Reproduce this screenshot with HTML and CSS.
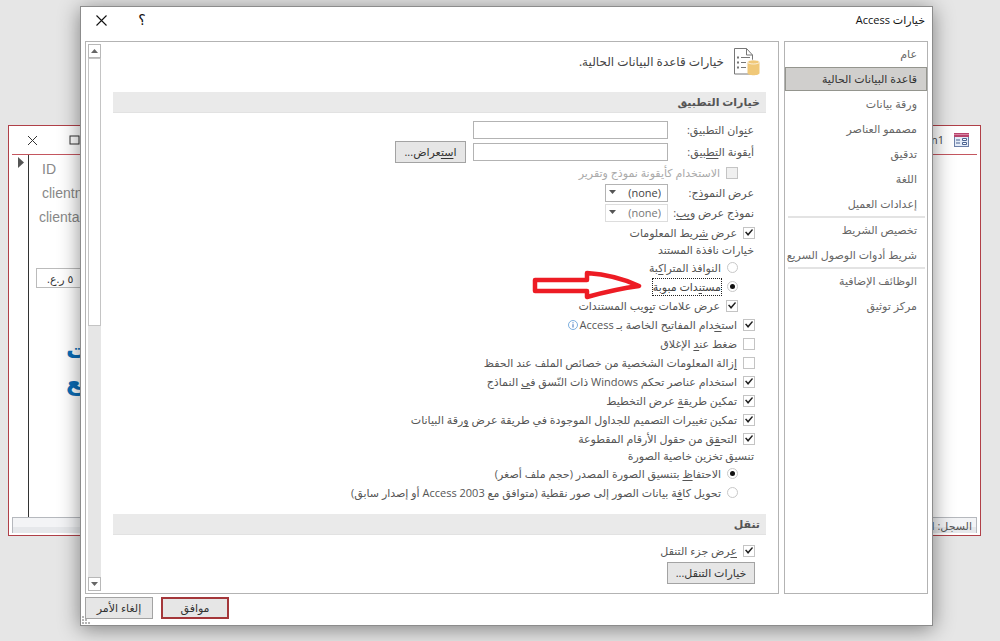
FILE: index.html
```html
<!DOCTYPE html>
<html lang="ar" dir="rtl">
<head>
<meta charset="utf-8">
<title>خيارات Access</title>
<link rel="stylesheet" href="styles.css">
</head>
<body>
<section class="form-window" aria-label="Form1">
  <header class="form-title">
    <svg class="form-icon" width="15" height="14" viewBox="0 0 15 14" aria-hidden="true"><rect x=".5" y=".5" width="14" height="13" fill="#e4ecf8" stroke="#6b7fa8"/><rect width="15" height="4" fill="#b8446c"/><rect y="1" width="15" height="1" fill="#d884a4"/><path d="M2 7h4M2 10h4" stroke="#4a6290"/><path d="M8.500 5.500h4v2h-4zM8.500 9.500h4v2h-4z" fill="#fff" stroke="#4a6290"/></svg>
    <span class="form-name" dir="ltr">m1</span>
    <span class="spacer"></span>
    <button class="win-btn" aria-label="تكبير"><svg width="11" height="11" viewBox="0 0 11 11"><rect x="1" y="1" width="9" height="8" fill="none" stroke="#333"/></svg></button>
    <button class="win-btn" aria-label="إغلاق النموذج"><svg width="11" height="11" viewBox="0 0 11 11"><path d="M1 1l9 9M10 1l-9 9" stroke="#333"/></svg></button>
  </header>
  <div class="form-body">
    <div class="form-fields" dir="ltr">
      <span class="field-name">ID</span>
      <span class="field-name">clientn</span>
      <span class="field-name outdent">clientad</span>
      <input class="amount" aria-label="المبلغ" value="٥ ر.ع." dir="rtl">
      <strong class="banner">ـت</strong>
      <strong class="banner">ـع</strong>
    </div>
    <div class="selector"><svg width="6" height="11" viewBox="0 0 6 11" aria-hidden="true"><path d="M0 0l6 5.500L0 11z" fill="#555"/></svg></div>
  </div>
  <footer class="record-bar">السجل: ا</footer>
</section>

<main class="dialog" role="dialog" aria-labelledby="dialog-title">
  <header class="dialog-title">
    <h1 id="dialog-title">خيارات Access</h1>
    <span class="spacer"></span>
    <button class="plain-btn">؟</button>
    <button class="plain-btn" aria-label="إغلاق"><svg width="11" height="11" viewBox="0 0 11 11"><path d="M.500.500l10 10M10.500.500l-10 10" stroke="#111" stroke-width="1.100"/></svg></button>
  </header>
  <div class="dialog-body">
    <nav class="sidebar">
      <a class="nav-item" href="#general">عام</a>
      <a class="nav-item current" href="#current" aria-current="page">قاعدة البيانات الحالية</a>
      <a class="nav-item" href="#datasheet">ورقة بيانات</a>
      <a class="nav-item" href="#designers">مصممو العناصر</a>
      <a class="nav-item" href="#proofing">تدقيق</a>
      <a class="nav-item" href="#language">اللغة</a>
      <a class="nav-item" href="#client">إعدادات العميل</a>
      <hr class="nav-rule">
      <a class="nav-item" href="#ribbon">تخصيص الشريط</a>
      <a class="nav-item" href="#quick">شريط أدوات الوصول السريع</a>
      <hr class="nav-rule">
      <a class="nav-item" href="#addins">الوظائف الإضافية</a>
      <a class="nav-item" href="#trust">مركز توثيق</a>
    </nav>
    <div class="pane">
      <div class="options">
        <div class="intro">
          <svg width="26" height="28" viewBox="0 0 26 28" aria-hidden="true"><path d="M.500.500h12l6 6.500v19H.500z" fill="#fff" stroke="#777"/><path d="M12.500.500v6.500h6" fill="none" stroke="#777"/><path d="M3 9.500h2M3 14.500h2M3 19.500h2" stroke="#777" stroke-width="2"/><path d="M7 9.500h9M7 14.500h5M7 19.500h5" stroke="#777"/><path d="M13.500 14v11c0 3 12 3 12 0V14z" fill="#f0c878"/><ellipse cx="19.500" cy="14" rx="6" ry="2" fill="#f0c878" stroke="#fff" stroke-width=".7"/></svg>
          <span>خيارات قاعدة البيانات الحالية.</span>
        </div>
        <h2 class="section">خيارات التطبيق</h2>
        <div class="group">
          <div class="field-row"><label class="field-label" for="app-title">ع<u>ن</u>وان التطبيق:</label><input class="text-box" id="app-title" type="text"></div>
          <div class="field-row"><label class="field-label" for="app-icon">أيقونة ال<u>تط</u>بيق:</label><input class="text-box" id="app-icon" type="text"><button class="btn browse">ا<u>ست</u>عراض...</button></div>
          <label class="row tall indent disabled"><input class="check" type="checkbox" disabled><span>الاستخدام كأيقونة نموذج وتقرير</span></label>
          <div class="combo-row"><label class="field-label" for="form-view">عرض النمو<u>ذ</u>ج:</label><span class="combo"><select id="form-view"><option>(none)</option></select></span></div>
          <div class="combo-row"><label class="field-label" for="web-view">نموذج عرض و<u>يب</u>:</label><span class="combo dim"><select id="web-view"><option>(none)</option></select></span></div>
          <label class="row"><input class="check" type="checkbox" checked><span>عرض <u>ش</u>ريط المعلومات</span></label>
          <p class="caption">خيارات نافذة المستند</p>
          <label class="row indent"><input class="radio" type="radio" name="windows"><span>النوافذ المترا<u>ك</u>بة</span></label>
          <label class="row indent"><input class="radio" type="radio" name="windows" checked><span class="focused">مست<u>ن</u>دات مبوبة</span>
            <svg class="pointer" width="110" height="30" viewBox="0 0 110 30" aria-hidden="true"><path d="M3 10H55V3Q84 5 107 16Q84 19 55 27V21H3z" fill="none" stroke="#ed1c24" stroke-width="4.500" stroke-linejoin="round"/></svg>
          </label>
          <label class="row indent"><input class="check" type="checkbox" checked><span>عرض علامات ت<u>ب</u>ويب المستندات</span></label>
          <label class="row"><input class="check" type="checkbox" checked><span>است<u>خ</u>دام المفاتيح الخاصة بـ Access</span><svg class="info" width="10" height="10" viewBox="0 0 10 10" aria-hidden="true"><circle cx="5" cy="5" r="4.500" fill="none" stroke="#5b9bd5" stroke-width=".8"/><path d="M5 4.200v3.300M5 2.300v1" stroke="#3a70b8"/></svg></label>
          <label class="row"><input class="check" type="checkbox"><span>ضغط عن<u>د</u> الإغلاق</span></label>
          <label class="row"><input class="check" type="checkbox"><span><u>إ</u>زالة المعلومات الشخصية من خصائص الملف عند الحفظ</span></label>
          <label class="row"><input class="check" type="checkbox" checked><span>استخدام عناصر تحكم Windows ذات النّسق ف<u>ي</u> النماذج</span></label>
          <label class="row"><input class="check" type="checkbox" checked><span>تمكين طريق<u>ة</u> عرض التخطيط</span></label>
          <label class="row"><input class="check" type="checkbox" checked><span>تمكين تغييرات التصميم للجداول الموجودة في طريقة عرض <u>و</u>رقة البيانات</span></label>
          <label class="row"><input class="check" type="checkbox" checked><span>التح<u>ق</u>ق من حقول الأرقام المقطوعة</span></label>
          <p class="caption">تنسيق تخزين خاصية الصورة</p>
          <label class="row indent"><input class="radio" type="radio" name="image" checked><span>الاحتفا<u>ظ</u> بتنسيق الصورة المصدر (حجم ملف أصغر)</span></label>
          <label class="row indent"><input class="radio" type="radio" name="image"><span>تحويل كا<u>ف</u>ة بيانات الصور إلى صور نقطية (متوافق مع Access 2003 أو إصدار سابق)</span></label>
        </div>
        <h2 class="section">تنقل</h2>
        <div class="group">
          <label class="row"><input class="check" type="checkbox" checked><span><u>ع</u>رض جزء التنقل</span></label>
          <button class="btn nav-options">خيارات التنقل...</button>
        </div>
      </div>
      <div class="scrollbar" aria-hidden="true">
        <span class="arrow up"></span><span class="thumb"></span><span class="track"></span><span class="arrow down"></span>
      </div>
    </div>
  </div>
  <footer class="dialog-footer">
    <button class="btn action primary">موافق</button>
    <button class="btn action">إلغاء الأمر</button>
  </footer>
  <svg class="grip" width="9" height="8" viewBox="0 0 9 8" aria-hidden="true"><path d="M0 1h2M0 4h2M3 4h2M0 7h2M3 7h2M6 7h2" stroke="#b5b5b5" stroke-width="2"/></svg>
</main>
</body>
</html>
```
FILE: styles.css
```css
* { box-sizing: border-box; }

body {
  margin: 0;
  min-height: 100vh;
  background: #e6e6e6;
  color: #555;
  font: 11px/16px "Open Sans", "DejaVu Sans", sans-serif;
  overflow: hidden;
}

button, input, select { font: inherit; color: inherit; margin: 0; }
h1, h2, p { margin: 0; font: inherit; }
u { text-decoration-thickness: 1px; text-underline-offset: 2px; text-decoration-skip-ink: none; }
.spacer { flex: 1; }

/* Form behind the dialog */
.form-window {
  position: absolute;
  inset: 125px 19px 105px 8px;
  display: flex;
  flex-direction: column;
  padding: 0 3px 2px;
  background: #fff;
  border: 1px solid #b04048;
}
.form-title {
  display: flex;
  align-items: center;
  gap: 10px;
  height: 29px;
  padding: 0 8px 0 15px;
  border-bottom: 1px solid #c4565f;
}
.form-name { color: #444; }
.win-btn {
  display: flex;
  width: 32px;
  padding: 0;
  border: 0;
  background: none;
  justify-content: flex-end;
}
.form-body { flex: 1; display: flex; }
.form-fields {
  flex: 1;
  display: flex;
  flex-direction: column;
  align-items: flex-start;
  padding: 2px 0 0 13px;
}
.field-name { font: 14px/24px "Liberation Sans", Arial, sans-serif; color: #888; }
.outdent { margin-left: -3px; }
.amount {
  width: 100px;
  height: 20px;
  margin: 39px 0 46px -6px;
  padding: 0 10px;
  border: 1px solid #bbb;
  color: #333;
  text-align: left;
}
.banner { font: bold 24px/32px "DejaVu Sans", sans-serif; color: #0b6cb5; padding-left: 24px; }
.selector {
  width: 17px;
  padding: 2px 4px 0 0;
  border-right: 1px solid #333;
}
.selector svg { display: block; }
.record-bar {
  height: 16px;
  padding: 0 4px;
  border: 1px solid #b5b8bd;
  border-bottom: 0;
  background: linear-gradient(#f3f4f6 60%, #e6e8eb 60%);
}

/* Options dialog */
.dialog {
  position: absolute;
  inset: 6px 67px 15px 80px;
  display: flex;
  flex-direction: column;
  padding: 0 4px;
  background: #fff;
  border: 1px solid #8c8c8c;
  box-shadow: 0 3px 20px rgba(0, 0, 0, .45);
}
.dialog-title {
  display: flex;
  align-items: center;
  height: 34px;
  padding: 0 3px 8px 10px;
  color: #111;
}
.plain-btn {
  display: flex;
  justify-content: center;
  width: 12px;
  margin-right: 29px;
  padding: 0;
  border: 0;
  background: none;
  font-size: 14px;
}
.dialog-body { flex: 1; display: flex; gap: 5px; min-height: 0; }
.sidebar {
  flex: 0 0 144px;
  display: flex;
  flex-direction: column;
  gap: 1px;
  min-width: 0;
  border: 1px solid #b3b3b3;
}
.nav-item {
  height: 24px;
  padding-right: 10px;
  line-height: 24px;
  color: #666;
  text-decoration: none;
  white-space: nowrap;
}
.current {
  padding-right: 9px;
  line-height: 22px;
  background: #d0cfcd;
  border: 1px solid #94958e;
  color: #333;
}
.nav-rule { height: 2px; width: 137px; margin: -1px auto; border: 0; background: #e3e3e3; }
.pane {
  flex: 1;
  display: flex;
  min-width: 0;
  border: 1px solid #b3b3b3;
}
.options { flex: 1; min-width: 0; padding: 0 12px 0 11px; }
.intro {
  display: flex;
  align-items: center;
  gap: 10px;
  height: 50px;
  padding: 0 6px 10px;
  font-size: 12px;
  color: #444;
}
.section {
  height: 21px;
  padding: 0 6px;
  background: #eaeaea;
  border-bottom: 1px solid #e2e2e2;
  font-weight: bold;
  line-height: 20px;
}
.group { padding: 6px 12px 12px 0; }
.field-row, .combo-row, .row { display: flex; align-items: center; white-space: nowrap; }
.field-row { height: 22px; }
.combo-row { height: 20px; }
.row { position: relative; height: 19px; gap: 6px; margin-right: -1px; }
.tall { height: 20px; }
.indent { padding-right: 17px; }
.disabled { color: #aaa; }
.caption { height: 16px; }
.field-label { width: 86px; }
.text-box { width: 195px; height: 18px; border: 1px solid #b3b3b3; background: #fff; }
.btn {
  height: 22px;
  padding: 0;
  border: 1px solid #a3a3a3;
  background: #e6e6e6;
  color: #333;
}
.browse { width: 71px; margin-right: 7px; }
.nav-options { width: 88px; margin: 2px -1px 0; }
.combo { position: relative; width: 63px; height: 18px; }
.combo select {
  appearance: none;
  width: 100%;
  height: 100%;
  padding: 0 6px;
  border: 1px solid #b3b3b3;
  background: #fff;
  line-height: 16px;
  color: #444;
}
.combo::after {
  content: "";
  position: absolute;
  top: 6px;
  left: 4px;
  width: 7px;
  height: 4px;
  background: #555;
  clip-path: polygon(0 0, 100% 0, 50% 100%);
}
.combo.dim select { border-color: #ddd; color: #777; }
.check {
  appearance: none;
  display: grid;
  place-items: center;
  width: 12px;
  height: 12px;
  border: 1px solid #c4c4c4;
}
.check:checked::before {
  content: "";
  width: 8px;
  height: 7px;
  background: #222;
  clip-path: polygon(0 45%, 15% 35%, 38% 65%, 88% 0, 100% 15%, 38% 100%);
}
.check:disabled { background: #f0f0f0; }
.radio {
  appearance: none;
  display: grid;
  place-items: center;
  width: 11px;
  height: 11px;
  border: 1px solid #c8c8c8;
  border-radius: 50%;
}
.radio:checked::before { content: ""; width: 5px; height: 5px; border-radius: 50%; background: #111; }
.focused { outline: 1px dotted #222; color: #444; }
.pointer { position: absolute; right: 113px; top: -7px; }
.info { margin-right: -4px; }

.scrollbar {
  display: flex;
  flex-direction: column;
  width: 15px;
  margin: 2px 0 2px 1px;
  padding: 0 1px;
}
.arrow { display: grid; place-items: center; height: 14px; border: 1px solid #b8b8b8; }
.arrow::before { content: ""; width: 7px; height: 4px; background: #666; }
.up::before { clip-path: polygon(50% 0, 100% 100%, 0 100%); }
.down::before { clip-path: polygon(0 0, 100% 0, 50% 100%); }
.thumb { flex: 268; border: 1px solid #c4c4c4; }
.track { flex: 253; background: #e6e6e6; }

.dialog-footer {
  display: flex;
  justify-content: flex-end;
  gap: 8px;
  padding: 3px 0 6px;
}
.action { width: 68px; }
.primary { border: 2px solid #a4373a; }
.grip { position: absolute; left: 1px; bottom: 1px; }
```
